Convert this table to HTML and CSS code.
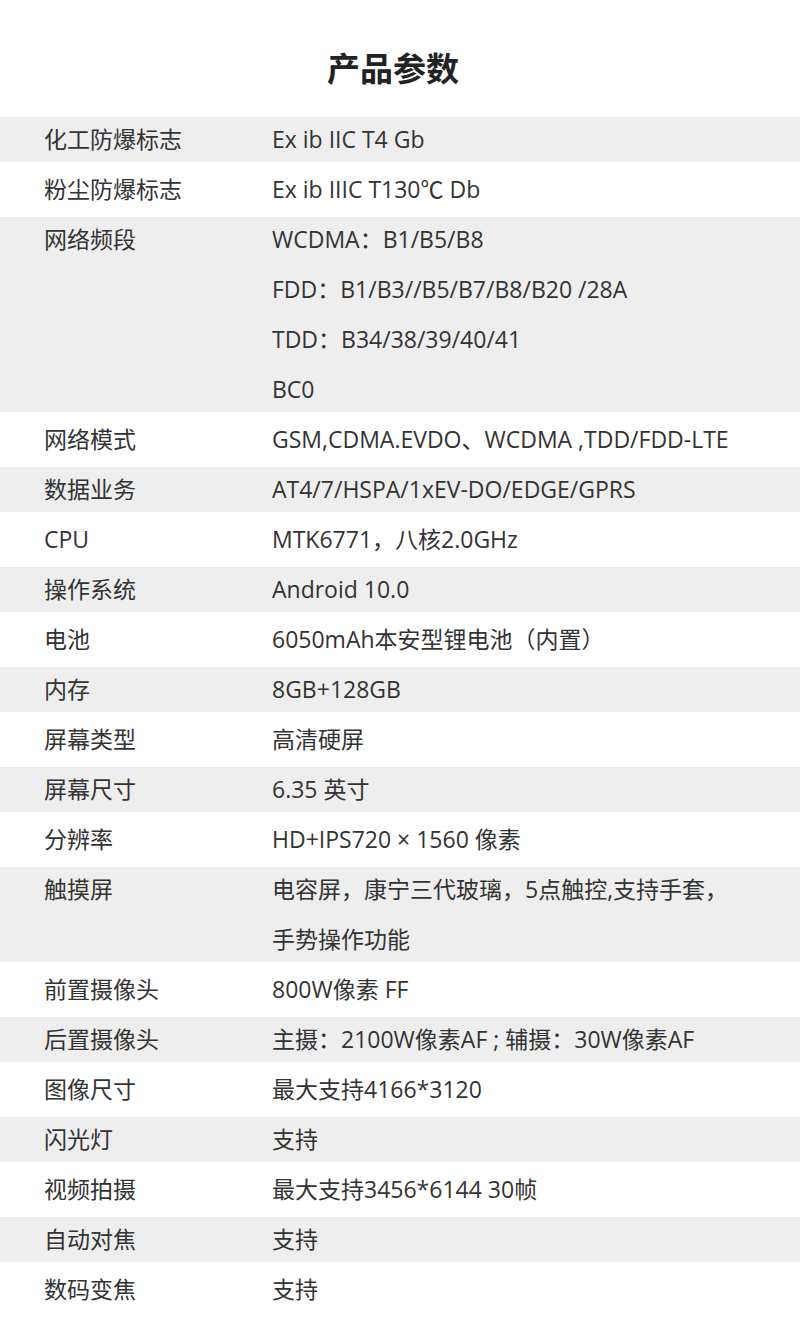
FILE: index.html
```html
<!DOCTYPE html>
<html lang="zh-CN">
<head>
<meta charset="utf-8">
<title>产品参数</title>
<link rel="stylesheet" href="styles.css">
</head>
<body>
<div class="page">
  <h1 class="title">产品参数</h1>
  <div class="table">
    <div class="row alt"><div class="label">化工防爆标志</div><div class="value"><p>Ex ib IIC T4 Gb</p></div></div>
    <div class="row"><div class="label">粉尘防爆标志</div><div class="value"><p>Ex ib IIIC T130℃ Db</p></div></div>
    <div class="row alt"><div class="label">网络频段</div><div class="value"><p>WCDMA：B1/B5/B8</p><p>FDD：B1/B3//B5/B7/B8/B20 /28A</p><p>TDD：B34/38/39/40/41</p><p>BC0</p></div></div>
    <div class="row"><div class="label">网络模式</div><div class="value"><p>GSM,CDMA.EVDO、WCDMA ,TDD/FDD-LTE</p></div></div>
    <div class="row alt"><div class="label">数据业务</div><div class="value"><p>AT4/7/HSPA/1xEV-DO/EDGE/GPRS</p></div></div>
    <div class="row"><div class="label">CPU</div><div class="value"><p>MTK6771，八核2.0GHz</p></div></div>
    <div class="row alt"><div class="label">操作系统</div><div class="value"><p>Android 10.0</p></div></div>
    <div class="row"><div class="label">电池</div><div class="value"><p>6050mAh本安型锂电池（内置）</p></div></div>
    <div class="row alt"><div class="label">内存</div><div class="value"><p>8GB+128GB</p></div></div>
    <div class="row"><div class="label">屏幕类型</div><div class="value"><p>高清硬屏</p></div></div>
    <div class="row alt"><div class="label">屏幕尺寸</div><div class="value"><p>6.35 英寸</p></div></div>
    <div class="row"><div class="label">分辨率</div><div class="value"><p>HD+IPS720 × 1560 像素</p></div></div>
    <div class="row alt"><div class="label">触摸屏</div><div class="value"><p>电容屏，康宁三代玻璃，5点触控,支持手套，</p><p>手势操作功能</p></div></div>
    <div class="row"><div class="label">前置摄像头</div><div class="value"><p>800W像素 FF</p></div></div>
    <div class="row alt"><div class="label">后置摄像头</div><div class="value"><p>主摄：2100W像素AF ; 辅摄：30W像素AF</p></div></div>
    <div class="row"><div class="label">图像尺寸</div><div class="value"><p>最大支持4166*3120</p></div></div>
    <div class="row alt"><div class="label">闪光灯</div><div class="value"><p>支持</p></div></div>
    <div class="row"><div class="label">视频拍摄</div><div class="value"><p>最大支持3456*6144 30帧</p></div></div>
    <div class="row alt"><div class="label">自动对焦</div><div class="value"><p>支持</p></div></div>
    <div class="row"><div class="label">数码变焦</div><div class="value"><p>支持</p></div></div>
  </div>
</div>
</body>
</html>
```

FILE: styles.css
```css
html, body {
  margin: 0;
  padding: 0;
  background: #ffffff;
}

.page {
  width: 800px;
  font-family: "Open Sans", "Noto Sans CJK SC", sans-serif;
  color: #333333;
}

.title {
  margin: 0;
  padding: 40px 14px 20px 0;
  height: 54px;
  line-height: 54px;
  text-align: center;
  font-family: "Noto Sans CJK SC", sans-serif;
  font-size: 33px;
  font-weight: 700;
  color: #222222;
}

.table {
  display: flex;
  flex-direction: column;
}

.row {
  display: grid;
  grid-template-columns: 228px 1fr;
  padding-left: 44px;
  font-size: 23px;
  line-height: 50px;
}

.row.alt {
  background: linear-gradient(#eeeeee, #eeeeee) center / 100% calc(100% - 5px) no-repeat;
}

.label {
  font-family: "Open Sans", "Noto Sans CJK SC", sans-serif;
  white-space: nowrap;
}

.value p {
  margin: 0;
  white-space: nowrap;
}
```
